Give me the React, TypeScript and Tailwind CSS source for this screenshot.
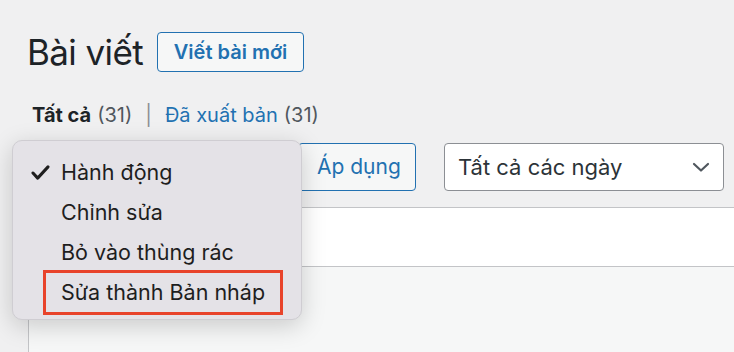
import React from "react";

const menuItems = ["Hành động", "Chỉnh sửa", "Bỏ vào thùng rác", "Sửa thành Bản nháp"];

const ActionMenu = () => {
  return (
    <div className="absolute left-[12px] top-[140px] w-[290px] h-[180px] rounded-[10px] bg-[#e4e2e7] border border-[#cfcdd2] shadow-[0_6px_24px_rgba(0,0,0,0.18)] pt-[11px] pl-[18px]">
      {menuItems.map((item, i) => (
        <div key={item} className="relative flex items-center h-[40px] text-[21.5px] text-[#1e1e1e]">
          {i === 0 && (
            <svg
              viewBox="0 0 20 16"
              className="absolute left-0 top-[13px] w-[19px] h-[15px]"
              fill="none"
              stroke="#1e1e1e"
              strokeWidth="3.2"
              strokeLinecap="round"
              strokeLinejoin="round"
            >
              <path d="M2 8.5 L7 14 L18 2" />
            </svg>
          )}
          <span className="pl-[30px]">{item}</span>
          {i === 3 && (
            <div className="absolute left-[12px] top-[-2px] w-[240px] h-[45px] border-[3px] border-[#e8432b]" />
          )}
        </div>
      ))}
    </div>
  );
};

export default function App() {
  return (
    <div className="relative w-[734px] h-[352px] overflow-hidden bg-[#f0f0f1] font-['Inter','Liberation_Sans',sans-serif]">
      {/* header */}
      <div className="flex items-center gap-[14px] pl-[27px] pt-[32px]">
        <h1 className="text-[35px] leading-[40px] tracking-[-0.6px] text-[#1d2327]">Bài viết</h1>
        <button className="h-[40px] w-[147px] rounded-[4px] border border-[#2271b1] bg-[#f6f7f7] text-[20px] font-semibold text-[#2271b1]">
          Viết bài mới
        </button>
      </div>

      {/* status filter */}
      <div className="flex items-center pl-[32px] mt-[30px] text-[20px] leading-[26px] text-[#50575e]">
        <span className="font-bold text-[#1d2327]">Tất cả</span>
        <span className="ml-[6px]">(31)</span>
        <span className="mx-[13px] text-[#8c8f94]">|</span>
        <span className="text-[#2271b1]">Đã xuất bản</span>
        <span className="ml-[6px]">(31)</span>
      </div>

      {/* toolbar */}
      <div className="flex items-center pl-[28px] mt-[15px] h-[48px]">
        <div className="w-[262px] h-[48px] rounded-[4px] border border-[#8c8f94] bg-white" />
        <button className="ml-[8px] w-[118px] h-[48px] rounded-[4px] border border-[#2271b1] bg-[#f6f7f7] text-[21px] text-[#2271b1] text-left pl-[18px]">
          Áp dụng
        </button>
        <div className="ml-[28px] w-[280px] h-[48px] rounded-[4px] border border-[#8c8f94] bg-white flex items-center justify-between pl-[13px] pr-[12px] text-[22px] text-[#2c3338]">
          <span>Tất cả các ngày</span>
          <svg viewBox="0 0 20 20" className="w-[20px] h-[20px]" fill="none" stroke="#50575e" strokeWidth="2.2" strokeLinecap="round" strokeLinejoin="round">
            <path d="M3 7 L10 13.5 L17 7" />
          </svg>
        </div>
      </div>

      {/* table */}
      <div className="ml-[28px] mt-[16px] border-l border-t border-[#c3c4c7] h-[200px]">
        <div className="h-[59px] bg-white border-b border-[#c3c4c7]" />
        <div className="h-full bg-[#f6f7f7]" />
      </div>

      <ActionMenu />
    </div>
  );
}
